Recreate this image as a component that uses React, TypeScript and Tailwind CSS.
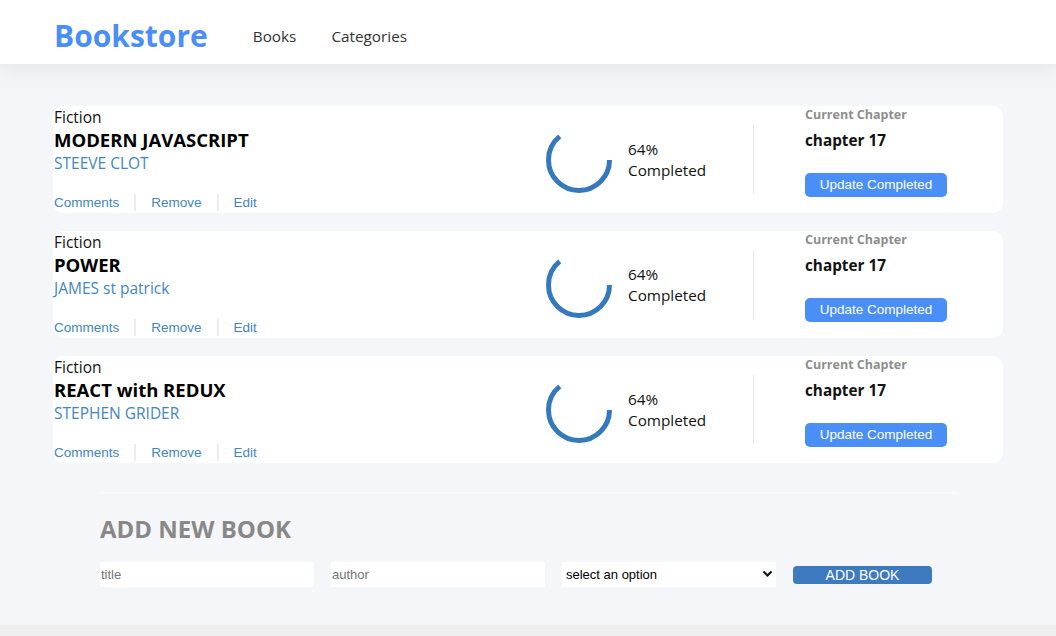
import React from "react";

const books = [
  { id: 1, category: "Fiction", title: "MODERN JAVASCRIPT", author: "STEEVE CLOT" },
  { id: 2, category: "Fiction", title: "POWER", author: "JAMES st patrick" },
  { id: 3, category: "Fiction", title: "REACT with REDUX", author: "STEPHEN GRIDER" },
];

const Progress = ({ percent }: { percent: number }) => {
  const r = 30.5;
  const c = 2 * Math.PI * r;
  return (
    <svg width="66" height="66" viewBox="0 0 66 66">
      <circle
        cx="33"
        cy="33"
        r={r}
        fill="none"
        stroke="#3579bd"
        strokeWidth="5"
        strokeDasharray={`${(c * percent) / 100} ${c}`}
      />
    </svg>
  );
};

const BookCard = ({ book }: { book: (typeof books)[number] }) => (
  <div className="flex h-[107px] w-[950px] rounded-[10px] bg-white">
    <div className="flex flex-1 flex-col pl-px">
      <span className="text-[15.5px] leading-[22px] text-[#121212]">{book.category}</span>
      <h2 className="text-[18.5px] font-bold leading-[24px] text-black">{book.title}</h2>
      <span className="text-[15.5px] leading-[22px] text-[#4386bf]">{book.author}</span>
      <div className="mt-auto mb-[2px] flex items-center font-['Liberation_Sans',Arial,sans-serif] text-[13.5px] leading-[16px] text-[#4386bf]">
        <button>Comments</button>
        <span className="mx-[15px] h-[17px] w-[2px] bg-[#ececec]" />
        <button>Remove</button>
        <span className="mx-[15px] h-[17px] w-[2px] bg-[#ececec]" />
        <button>Edit</button>
      </div>
    </div>
    <div className="flex items-center">
      <Progress percent={64} />
      <div className="ml-[16px] w-[78px] text-[15.3px] leading-[21px] text-[#121212]">
        <p>64%</p>
        <p>Completed</p>
      </div>
      <span className="ml-[47px] h-[69px] w-px bg-[#e8e8e8]" />
    </div>
    <div className="ml-[51px] flex w-[198px] flex-col">
      <span className="text-[12.5px] font-bold leading-[18px] text-[#8e8e8e]">Current Chapter</span>
      <span className="mt-[5px] text-[15.3px] font-bold leading-[22px] text-[#121212]">chapter 17</span>
      <button className="mt-[22px] h-[24px] w-[142px] rounded-[5px] bg-[#4a8ff8] font-['Liberation_Sans',Arial,sans-serif] text-[13.5px] text-white">
        Update Completed
      </button>
    </div>
  </div>
);

export default function App() {
  return (
    <div className="min-h-screen bg-[#efefef] font-['Open_Sans',sans-serif]">
      <div className="h-[625px] bg-[#f5f6fa]">
        <header className="relative z-10 flex h-[64px] items-center bg-white pl-[54px] pt-[8px] shadow-[0_6px_24px_rgba(0,0,0,0.07)]">
          <h1 className="text-[30px] font-bold leading-none text-[#4a8ff8]">Bookstore</h1>
          <nav className="ml-[45px] flex gap-[35px] text-[15.3px] text-[#333]">
            <a>Books</a>
            <a>Categories</a>
          </nav>
        </header>
        <main className="flex flex-col items-center pt-[42px]">
          <div className="flex flex-col gap-[18px]">
            {books.map((b) => (
              <BookCard key={b.id} book={b} />
            ))}
          </div>
          <div className="mt-[29px] w-[857px] self-start ml-[100px] border-t-2 border-[#f9f9fb]">
            <h2 className="mt-[19px] text-[24px] font-bold leading-[32px] text-[#888]">ADD NEW BOOK</h2>
            <form className="mt-[17px] flex items-center gap-[17px] font-['Liberation_Sans',Arial,sans-serif] text-[13px]">
              <input placeholder="title" className="h-[25px] w-[214px] bg-white px-px placeholder-[#757575] outline-none" />
              <input placeholder="author" className="h-[25px] w-[214px] bg-white px-px placeholder-[#757575] outline-none" />
              <div className="relative h-[25px] w-[214px] bg-white">
                <select className="h-full w-full appearance-none bg-transparent pl-[4px] text-black outline-none">
                  <option>select an option</option>
                </select>
                <svg className="pointer-events-none absolute right-[3px] top-[8px]" width="11" height="8" viewBox="0 0 11 8">
                  <path d="M1.5 1.5 L5.5 5.5 L9.5 1.5" fill="none" stroke="#111" strokeWidth="2.2" />
                </svg>
              </div>
              <button type="button" className="h-[18px] w-[139px] rounded-[4px] bg-[#3d7ac0] text-[14px] leading-[18px] text-white">
                ADD BOOK
              </button>
            </form>
          </div>
        </main>
      </div>
    </div>
  );
}
